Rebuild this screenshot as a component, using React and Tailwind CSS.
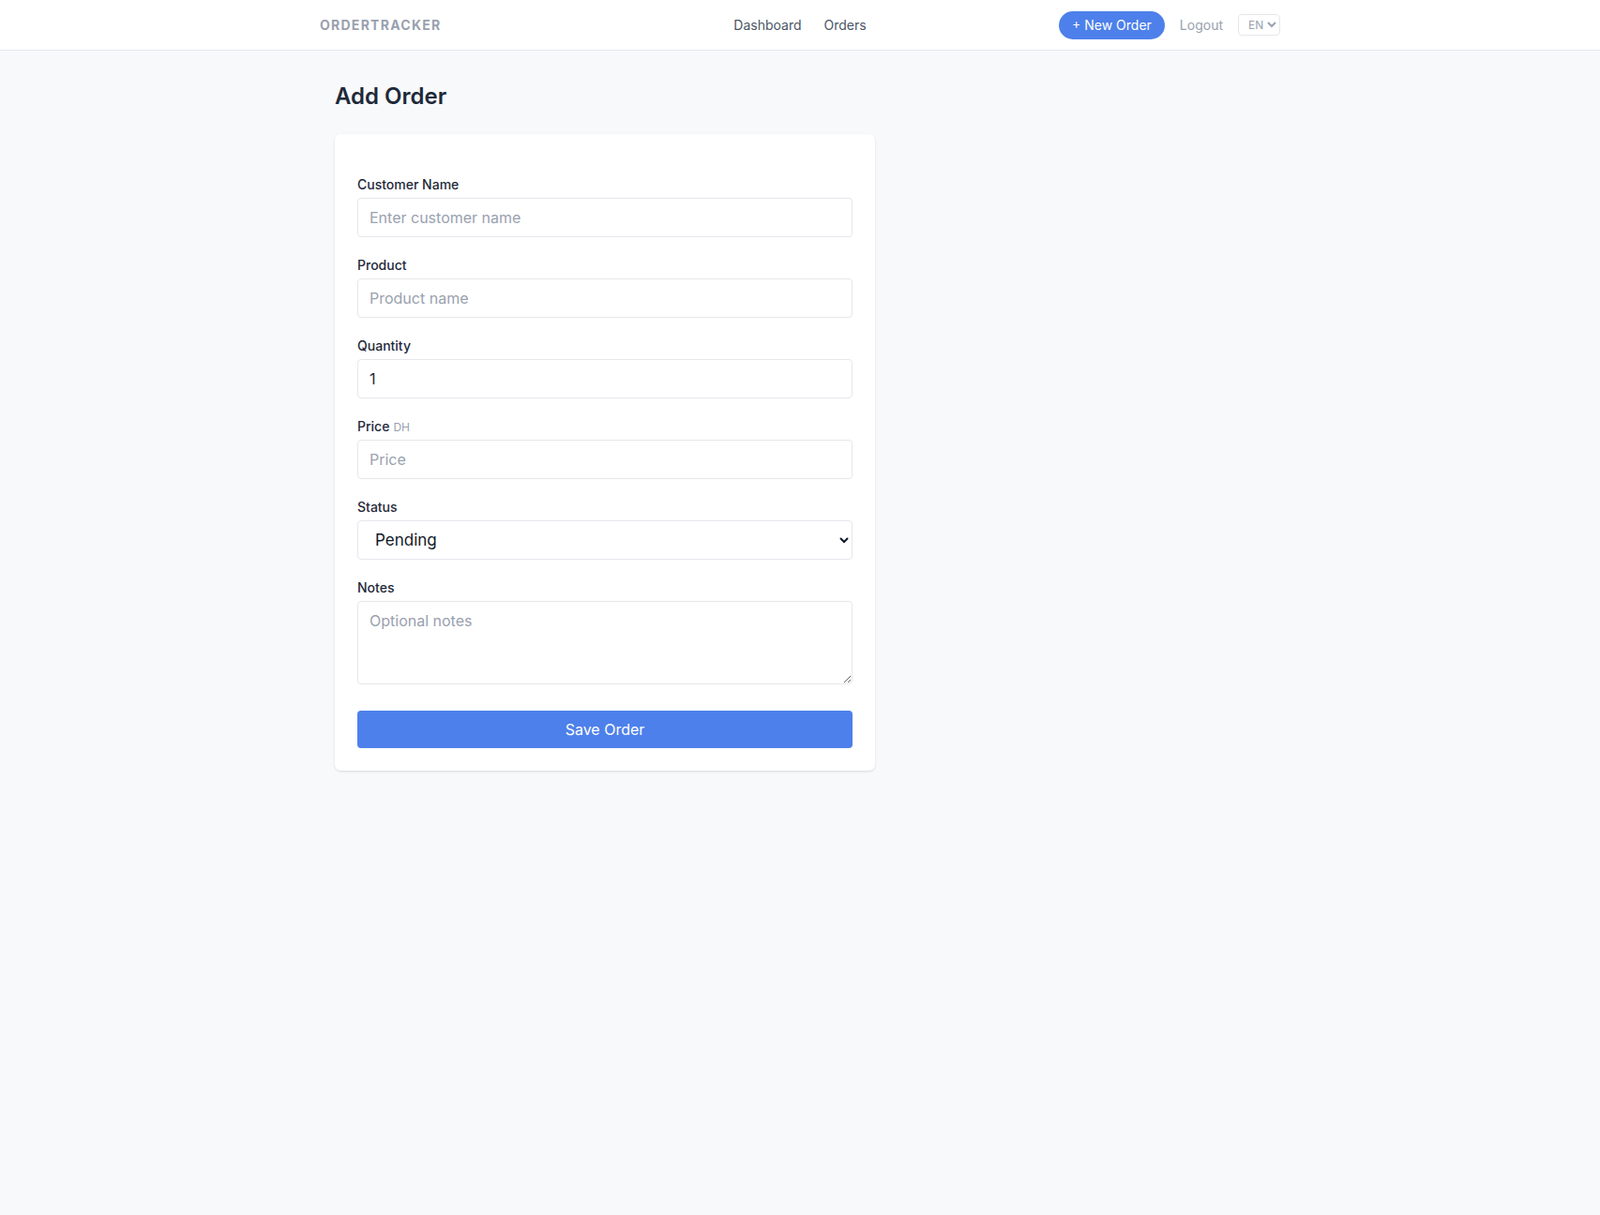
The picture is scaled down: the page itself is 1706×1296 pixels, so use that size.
import React, { useState } from 'react';

function Field({ label, extra, children }) {
  return (
    <div className="mb-5">
      <label className="block text-sm font-medium text-gray-800 mb-1 leading-5">
        {label}
        {extra && <span className="ml-1 text-xs font-normal text-gray-400">{extra}</span>}
      </label>
      {children}
    </div>
  );
}

const inputClass =
  'block w-full h-[42px] px-3 border border-gray-200 rounded text-base text-gray-800 placeholder:text-gray-400 bg-white focus:outline-none';

function App() {
  const [form, setForm] = useState({
    customer: '',
    product: '',
    quantity: '1',
    price: '',
    status: 'pending',
    notes: '',
  });

  const update = (key) => (e) => setForm({ ...form, [key]: e.target.value });

  return (
    <div className="min-h-screen bg-[#f8f9fb]" style={{ fontFamily: 'Inter, "Liberation Sans", sans-serif' }}>
      <nav className="bg-white border-b border-gray-200">
        <div className="max-w-5xl mx-auto h-[53px] grid grid-cols-3 items-center">
          <div className="text-sm font-bold tracking-[0.09em] text-gray-400">ORDERTRACKER</div>
          <div className="justify-self-center flex items-center gap-6 text-sm text-gray-600">
            <a href="#" className="hover:text-gray-900">Dashboard</a>
            <a href="#" className="hover:text-gray-900">Orders</a>
          </div>
          <div className="justify-self-end flex items-center gap-4">
            <button className="h-[30px] px-3.5 rounded-full bg-[#4d80ea] text-white text-sm">
              + New Order
            </button>
            <a href="#" className="text-sm text-gray-400 hover:text-gray-600">Logout</a>
            <select className="h-[23px] w-[45px] pl-1.5 border border-gray-200 rounded text-xs text-gray-400 bg-white">
              <option>EN</option>
              <option>FR</option>
            </select>
          </div>
        </div>
      </nav>

      <main className="max-w-5xl mx-auto px-4 pt-[33px]">
        <h1 className="text-2xl font-semibold text-gray-800 leading-8 mb-6">Add Order</h1>

        <div className="max-w-xl bg-white rounded-md shadow-sm p-6 pt-[44px]">
          <form onSubmit={(e) => e.preventDefault()}>
            <Field label="Customer Name">
              <input
                className={inputClass}
                placeholder="Enter customer name"
                value={form.customer}
                onChange={update('customer')}
              />
            </Field>

            <Field label="Product">
              <input
                className={inputClass}
                placeholder="Product name"
                value={form.product}
                onChange={update('product')}
              />
            </Field>

            <Field label="Quantity">
              <input
                type="number"
                className={inputClass}
                value={form.quantity}
                onChange={update('quantity')}
              />
            </Field>

            <Field label="Price" extra="DH">
              <input
                className={inputClass}
                placeholder="Price"
                value={form.price}
                onChange={update('price')}
              />
            </Field>

            <Field label="Status">
              <select
                className="block w-full h-[42px] pl-3.5 pr-2 border border-gray-200 rounded text-[17px] text-gray-900 bg-white"
                value={form.status}
                onChange={update('status')}
              >
                <option value="pending">Pending</option>
                <option value="shipped">Shipped</option>
                <option value="delivered">Delivered</option>
                <option value="cancelled">Cancelled</option>
              </select>
            </Field>

            <Field label="Notes">
              <textarea
                className="block w-full h-[89px] px-3 py-2 border border-gray-200 rounded text-base text-gray-800 placeholder:text-gray-400 focus:outline-none"
                placeholder="Optional notes"
                value={form.notes}
                onChange={update('notes')}
              />
            </Field>

            <button
              type="submit"
              className="mt-2 w-full h-10 rounded bg-[#4d80ea] text-white text-base"
            >
              Save Order
            </button>
          </form>
        </div>
      </main>
    </div>
  );
}

export default App;
